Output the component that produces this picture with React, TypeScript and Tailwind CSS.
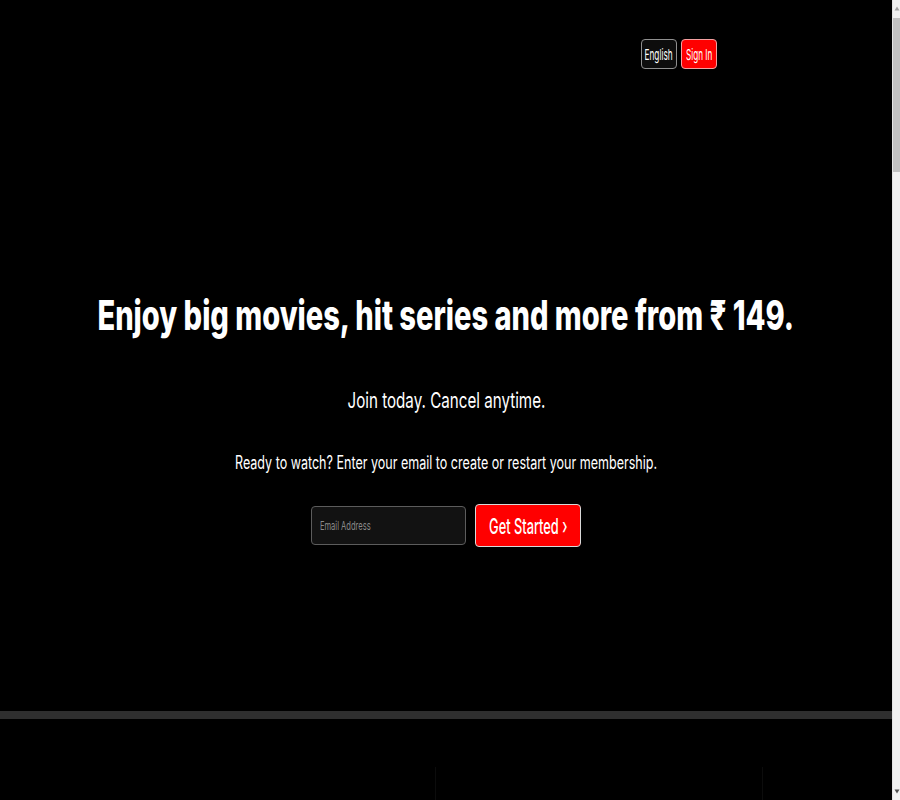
import { useLayoutEffect, useRef, useState, type ReactNode } from "react";

function Fit({ w, children }: { w: number; children: ReactNode }) {
  const ref = useRef<HTMLSpanElement>(null);
  const [s, setS] = useState(1);
  useLayoutEffect(() => {
    const measure = () => {
      const el = ref.current;
      if (el && el.offsetWidth) setS(w / el.offsetWidth);
    };
    measure();
    if (document.fonts) document.fonts.ready.then(measure);
  }, [w]);
  return (
    <span className="inline-flex justify-center" style={{ width: w }}>
      <span
        ref={ref}
        className="inline-block shrink-0 whitespace-nowrap"
        style={{ transform: `scaleX(${s})` }}
      >
        {children}
      </span>
    </span>
  );
}

function Scrollbar() {
  return (
    <div className="flex w-[8px] shrink-0 flex-col border-l border-[#e4e4e4] bg-[#f1f1f1]">
      <div className="flex h-[17px] items-center justify-center">
        <svg width="6" height="5" viewBox="0 0 6 5">
          <path d="M3 0.5 L5.5 4.5 L0.5 4.5 Z" fill="#a3a3a3" />
        </svg>
      </div>
      <div className="mt-[1px] h-[154px] bg-[#c1c1c1]" />
      <div className="flex-1" />
      <div className="flex h-[17px] items-center justify-center">
        <svg width="6" height="5" viewBox="0 0 6 5">
          <path d="M3 4.5 L5.5 0.5 L0.5 0.5 Z" fill="#505050" />
        </svg>
      </div>
    </div>
  );
}

export default function App() {
  return (
    <div className="flex h-[800px] bg-black font-['Inter','Noto_Sans',sans-serif] text-white">
      <main className="h-full min-w-0 flex-1 overflow-hidden">
        <section className="flex h-[711px] flex-col">
          <nav className="flex justify-end gap-[4px] pr-[175px] pt-[39px]">
            <button className="flex h-[30px] w-[36px] items-center justify-center rounded-[4px] border border-[#8f8f8f] bg-[#0d0d0d] text-[15px] leading-none text-white">
              <Fit w={28}>English</Fit>
            </button>
            <button className="flex h-[30px] w-[36px] items-center justify-center rounded-[4px] border border-[#f3a0a0] bg-[#ff0000] text-[15px] leading-none text-white">
              <Fit w={26}>Sign In</Fit>
            </button>
          </nav>

          <div className="mt-[222px] flex flex-col items-center">
            <h1 className="text-[41px] font-extrabold leading-[48px]">
              <Fit w={697}>Enjoy big movies, hit series and more from ₹ 149.</Fit>
            </h1>
            <p className="mt-[48px] text-[22px] leading-[27px]">
              <Fit w={198}>Join today. Cancel anytime.</Fit>
            </p>
            <p className="mt-[38px] text-[18px] leading-[22px]">
              <Fit w={422}>Ready to watch? Enter your email to create or restart your membership.</Fit>
            </p>
            <form className="mt-[30px] flex items-center gap-[9px]" onSubmit={(e) => e.preventDefault()}>
              <div className="relative h-[39px] w-[155px]">
                <input
                  id="email"
                  type="email"
                  aria-label="Email Address"
                  className="h-full w-full rounded-[4px] border border-[#5c5c5c] bg-[#121212] pl-[9px] text-[12px] text-white outline-none"
                />
                <label
                  htmlFor="email"
                  className="pointer-events-none absolute left-[9px] top-0 flex h-full items-center text-[12px] text-[#8a8a8a]"
                >
                  <Fit w={51}>Email Address</Fit>
                </label>
              </div>
              <button
                type="submit"
                className="flex h-[43px] w-[106px] items-center justify-center rounded-[4px] border border-[#d9d9d9] bg-[#ff0000] text-[22px] font-medium leading-none text-white"
              >
                <Fit w={78}>Get Started ›</Fit>
              </button>
            </form>
          </div>
        </section>

        <div className="h-[8px] bg-[#2f2f2f]" />

        <section className="h-[800px] pl-[435px] pt-[48px]">
          <div className="h-[320px] w-[328px] border-x border-[#0c0c0c]" />
        </section>
      </main>
      <Scrollbar />
    </div>
  );
}
